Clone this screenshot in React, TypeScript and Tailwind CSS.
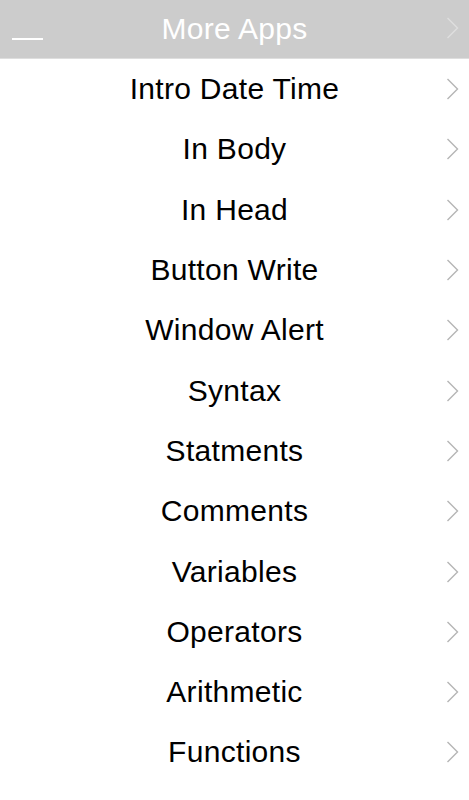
import React from "react";

const items = [
  "Intro Date Time",
  "In Body",
  "In Head",
  "Button Write",
  "Window Alert",
  "Syntax",
  "Statments",
  "Comments",
  "Variables",
  "Operators",
  "Arithmetic",
  "Functions",
];

function Chevron({ color }: { color: string }) {
  return (
    <svg width="13" height="22" viewBox="0 0 13 22" fill="none">
      <polyline points="1.5,1 11.5,11 1.5,21" stroke={color} strokeWidth="1.4" strokeLinejoin="miter" />
    </svg>
  );
}

export default function App() {
  return (
    <div
      className="w-[469px] h-[800px] bg-white overflow-hidden flex flex-col"
      style={{ fontFamily: '"Liberation Sans", Arial, sans-serif' }}
    >
      <div className="h-[59px] bg-[#cccccc] border-b border-[#dedede] grid grid-cols-[56px_1fr_56px]">
        <div className="flex items-end pl-[12px] pb-[18px]">
          <div className="w-[31px] h-[2px] bg-white" />
        </div>
        <div className="flex items-center justify-center">
          <span className="text-white text-[30px] leading-none tracking-[0.3px] whitespace-nowrap">More Apps</span>
        </div>
        <div className="flex items-center justify-end pr-[10px] pb-[2px]">
          <Chevron color="#dedede" />
        </div>
      </div>
      <div className="flex flex-col">
        {items.map((t) => (
          <div key={t} className="h-[60.3px] grid grid-cols-[56px_1fr_56px]">
            <div />
            <div className="flex items-center justify-center">
              <span className="text-black text-[30px] leading-none tracking-[0.3px] whitespace-nowrap">{t}</span>
            </div>
            <div className="flex items-center justify-end pr-[10px]">
              <Chevron color="#b5b5b5" />
            </div>
          </div>
        ))}
      </div>
    </div>
  );
}
